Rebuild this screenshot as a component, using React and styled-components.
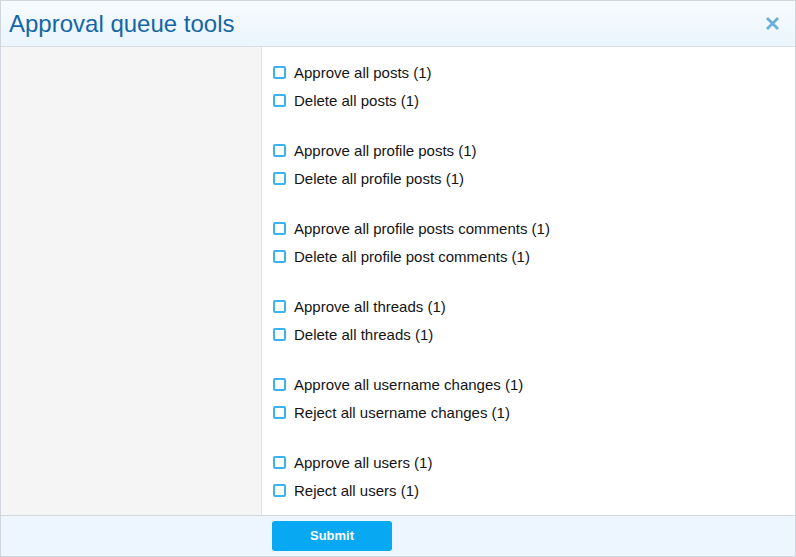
import React from "react";
import styled, { createGlobalStyle } from "styled-components";

const Global = createGlobalStyle`
  html, body { margin: 0; padding: 0; background: #fff; }
  * { box-sizing: border-box; }
  body { font-family: "Liberation Sans", Arial, sans-serif; }
`;

const Dialog = styled.div`
  width: 796px;
  height: 557px;
  border: 1px solid #d0d6dc;
  display: flex;
  flex-direction: column;
  background: #fff;
`;

const Header = styled.div`
  height: 46px;
  flex: none;
  display: flex;
  align-items: center;
  justify-content: space-between;
  padding: 0 14px 0 8px;
  background: linear-gradient(to bottom, #f7fbfe, #eaf5fd);
  border-bottom: 1px solid #d6dde3;
`;

const Title = styled.h1`
  margin: 0;
  font-size: 24px;
  font-weight: 400;
  color: #1566a5;
  line-height: 1;
  padding-top: 1px;
`;

const Close = styled.button`
  border: 0;
  background: none;
  padding: 0;
  width: 18px;
  height: 18px;
  display: flex;
  align-items: center;
  justify-content: center;
  cursor: pointer;
`;

const Body = styled.div`
  flex: 1;
  display: grid;
  grid-template-columns: 261px 1fr;
  min-height: 0;
`;

const Side = styled.div`
  background: #f5f5f5;
  border-right: 1px solid #e3e3e3;
`;

const Main = styled.div`
  padding: 11px 11px;
  display: flex;
  flex-direction: column;
  gap: 22px;
`;

const Group = styled.div`
  display: flex;
  flex-direction: column;
`;

const Row = styled.label`
  height: 28px;
  display: flex;
  align-items: center;
  gap: 8px;
  font-size: 15px;
  color: #141414;
  cursor: pointer;
`;

const Box = styled.span`
  width: 13px;
  height: 13px;
  border: 2px solid #3db2f0;
  border-radius: 2px;
  background: #fff;
  flex: none;
`;

const Footer = styled.div`
  height: 41px;
  flex: none;
  display: grid;
  grid-template-columns: 261px 1fr;
  align-items: center;
  background: #edf6fe;
  border-top: 1px solid #d3d8dd;
`;

const Submit = styled.button`
  grid-column: 2;
  margin-left: 10px;
  width: 120px;
  height: 30px;
  border: 0;
  border-radius: 3px;
  background: #08a8f2;
  color: #fff;
  font-family: "Liberation Sans", Arial, sans-serif;
  font-size: 13px;
  font-weight: 700;
  cursor: pointer;
  margin-top: -1px;
`;

const groups = [
  ["Approve all posts (1)", "Delete all posts (1)"],
  ["Approve all profile posts (1)", "Delete all profile posts (1)"],
  ["Approve all profile posts comments (1)", "Delete all profile post comments (1)"],
  ["Approve all threads (1)", "Delete all threads (1)"],
  ["Approve all username changes (1)", "Reject all username changes (1)"],
  ["Approve all users (1)", "Reject all users (1)"],
];

export default function App() {
  return (
    <>
      <Global />
      <Dialog>
        <Header>
          <Title>Approval queue tools</Title>
          <Close aria-label="Close">
            <svg width="15" height="15" viewBox="0 0 15 15">
              <path d="M2 2 L13 13 M13 2 L2 13" stroke="#6aaed9" strokeWidth="2.8" strokeLinecap="butt" />
            </svg>
          </Close>
        </Header>
        <Body>
          <Side />
          <Main>
            {groups.map((g, i) => (
              <Group key={i}>
                {g.map((t) => (
                  <Row key={t}>
                    <Box />
                    {t}
                  </Row>
                ))}
              </Group>
            ))}
          </Main>
        </Body>
        <Footer>
          <Submit>Submit</Submit>
        </Footer>
      </Dialog>
    </>
  );
}
